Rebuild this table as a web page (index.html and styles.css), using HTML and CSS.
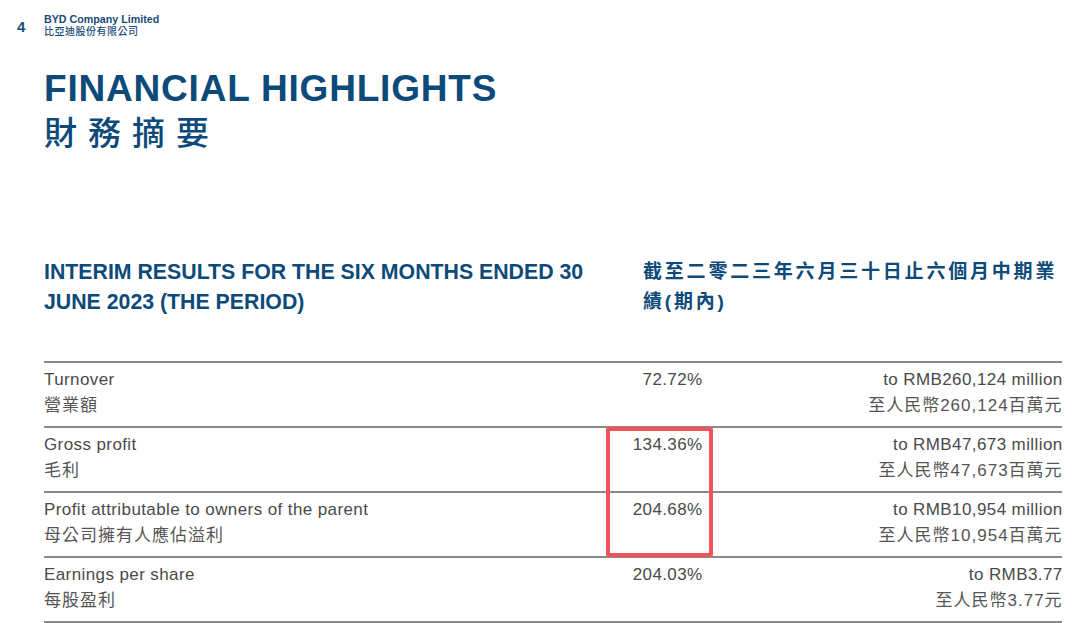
FILE: index.html
```html
<!DOCTYPE html>
<html lang="zh-Hant">
<head>
<meta charset="utf-8">
<title>Financial Highlights</title>
<link rel="stylesheet" href="styles.css">
</head>
<body>
<div class="page">
  <header class="top">
    <div class="pagenum">4</div>
    <div class="brand">
      <div class="brand-en">BYD Company Limited</div>
      <div class="brand-zh">比亞迪股份有限公司</div>
    </div>
  </header>

  <h1 class="title-en">FINANCIAL HIGHLIGHTS</h1>
  <h2 class="title-zh">財務摘要</h2>

  <section class="period">
    <div class="period-en">INTERIM RESULTS FOR THE SIX MONTHS ENDED 30<br>JUNE 2023 (THE PERIOD)</div>
    <div class="period-zh">截至二零二三年六月三十日止六個月中期業<br>績(期內)</div>
  </section>

  <div class="table">
    <div class="row">
      <div class="cell label"><span class="en">Turnover</span><span class="zh">營業額</span></div>
      <div class="cell pct"><span class="en">72.72%</span></div>
      <div class="cell amt"><span class="en">to RMB260,124 million</span><span class="zh">至人民幣260,124百萬元</span></div>
    </div>
    <div class="row">
      <div class="cell label"><span class="en">Gross profit</span><span class="zh">毛利</span></div>
      <div class="cell pct"><span class="en">134.36%</span></div>
      <div class="cell amt"><span class="en">to RMB47,673 million</span><span class="zh">至人民幣47,673百萬元</span></div>
    </div>
    <div class="row">
      <div class="cell label"><span class="en">Profit attributable to owners of the parent</span><span class="zh">母公司擁有人應佔溢利</span></div>
      <div class="cell pct"><span class="en">204.68%</span></div>
      <div class="cell amt"><span class="en">to RMB10,954 million</span><span class="zh">至人民幣10,954百萬元</span></div>
    </div>
    <div class="row">
      <div class="cell label"><span class="en">Earnings per share</span><span class="zh">每股盈利</span></div>
      <div class="cell pct"><span class="en">204.03%</span></div>
      <div class="cell amt"><span class="en">to RMB3.77</span><span class="zh">至人民幣3.77元</span></div>
    </div>
    <div class="highlight"></div>
  </div>
</div>
</body>
</html>
```

FILE: styles.css
```css
html, body {
  margin: 0;
  padding: 0;
  background: #ffffff;
}

body {
  font-family: "Liberation Sans", Arial, "Noto Sans CJK TC", sans-serif;
  color: #4a4a4a;
}

.page {
  width: 1080px;
  height: 623px;
  box-sizing: border-box;
  padding: 13px 18px 0 44px;
  overflow: hidden;
}

.top {
  display: flex;
  align-items: flex-start;
  margin-left: -27px;
}

.pagenum {
  width: 27px;
  margin-top: 6px;
  font-size: 15px;
  line-height: 16px;
  font-weight: 700;
  color: #1a4b78;
}

.brand {
  color: #1a4b78;
}

.brand-en {
  font-size: 10.7px;
  line-height: 12px;
  font-weight: 700;
}

.brand-zh {
  font-family: "Noto Sans CJK TC", "Noto Sans CJK SC", sans-serif;
  font-size: 10px;
  line-height: 12px;
  font-weight: 500;
  letter-spacing: 0.5px;
}

.title-en {
  margin: 32px 0 0 0;
  font-size: 37px;
  line-height: 40px;
  font-weight: 700;
  letter-spacing: 0.8px;
  color: #0c4a7a;
}

.title-zh {
  margin: 0;
  font-family: "Noto Sans CJK TC", "Noto Sans CJK SC", sans-serif;
  font-size: 33px;
  line-height: 44px;
  font-weight: 500;
  letter-spacing: 11px;
  color: #0c4a7a;
}

.period {
  display: grid;
  grid-template-columns: 599px 1fr;
  margin-top: 104px;
  color: #0c4a7a;
}

.period-en {
  font-size: 21.3px;
  line-height: 30px;
  font-weight: 700;
}

.period-zh {
  font-family: "Liberation Sans", "Noto Sans CJK TC", sans-serif;
  font-size: 19px;
  line-height: 30px;
  font-weight: 700;
  letter-spacing: 2.8px;
  white-space: nowrap;
}

.table {
  position: relative;
  margin-top: 44px;
  border-bottom: 2px solid #8a8a8a;
}

.row {
  display: grid;
  grid-template-columns: 556px 102px 360px;
  border-top: 2px solid #8a8a8a;
  padding: 4px 0 7px 0;
  height: 52px;
}

.cell {
  display: flex;
  flex-direction: column;
}

.pct, .amt {
  align-items: flex-end;
  text-align: right;
}

.en {
  font-size: 17px;
  line-height: 26px;
  letter-spacing: 0.4px;
  white-space: nowrap;
}

.zh {
  font-family: "Liberation Sans", "Noto Sans CJK TC", sans-serif;
  font-size: 17px;
  line-height: 26px;
  letter-spacing: 1px;
  white-space: nowrap;
  color: #555555;
}

.pct .en, .amt .en, .amt .zh {
  margin-right: -0.6px;
}

.highlight {
  position: absolute;
  top: 66px;
  left: 562px;
  width: 107px;
  height: 130px;
  box-sizing: border-box;
  border: 4px solid #f2535a;
  border-radius: 3px;
}
```
